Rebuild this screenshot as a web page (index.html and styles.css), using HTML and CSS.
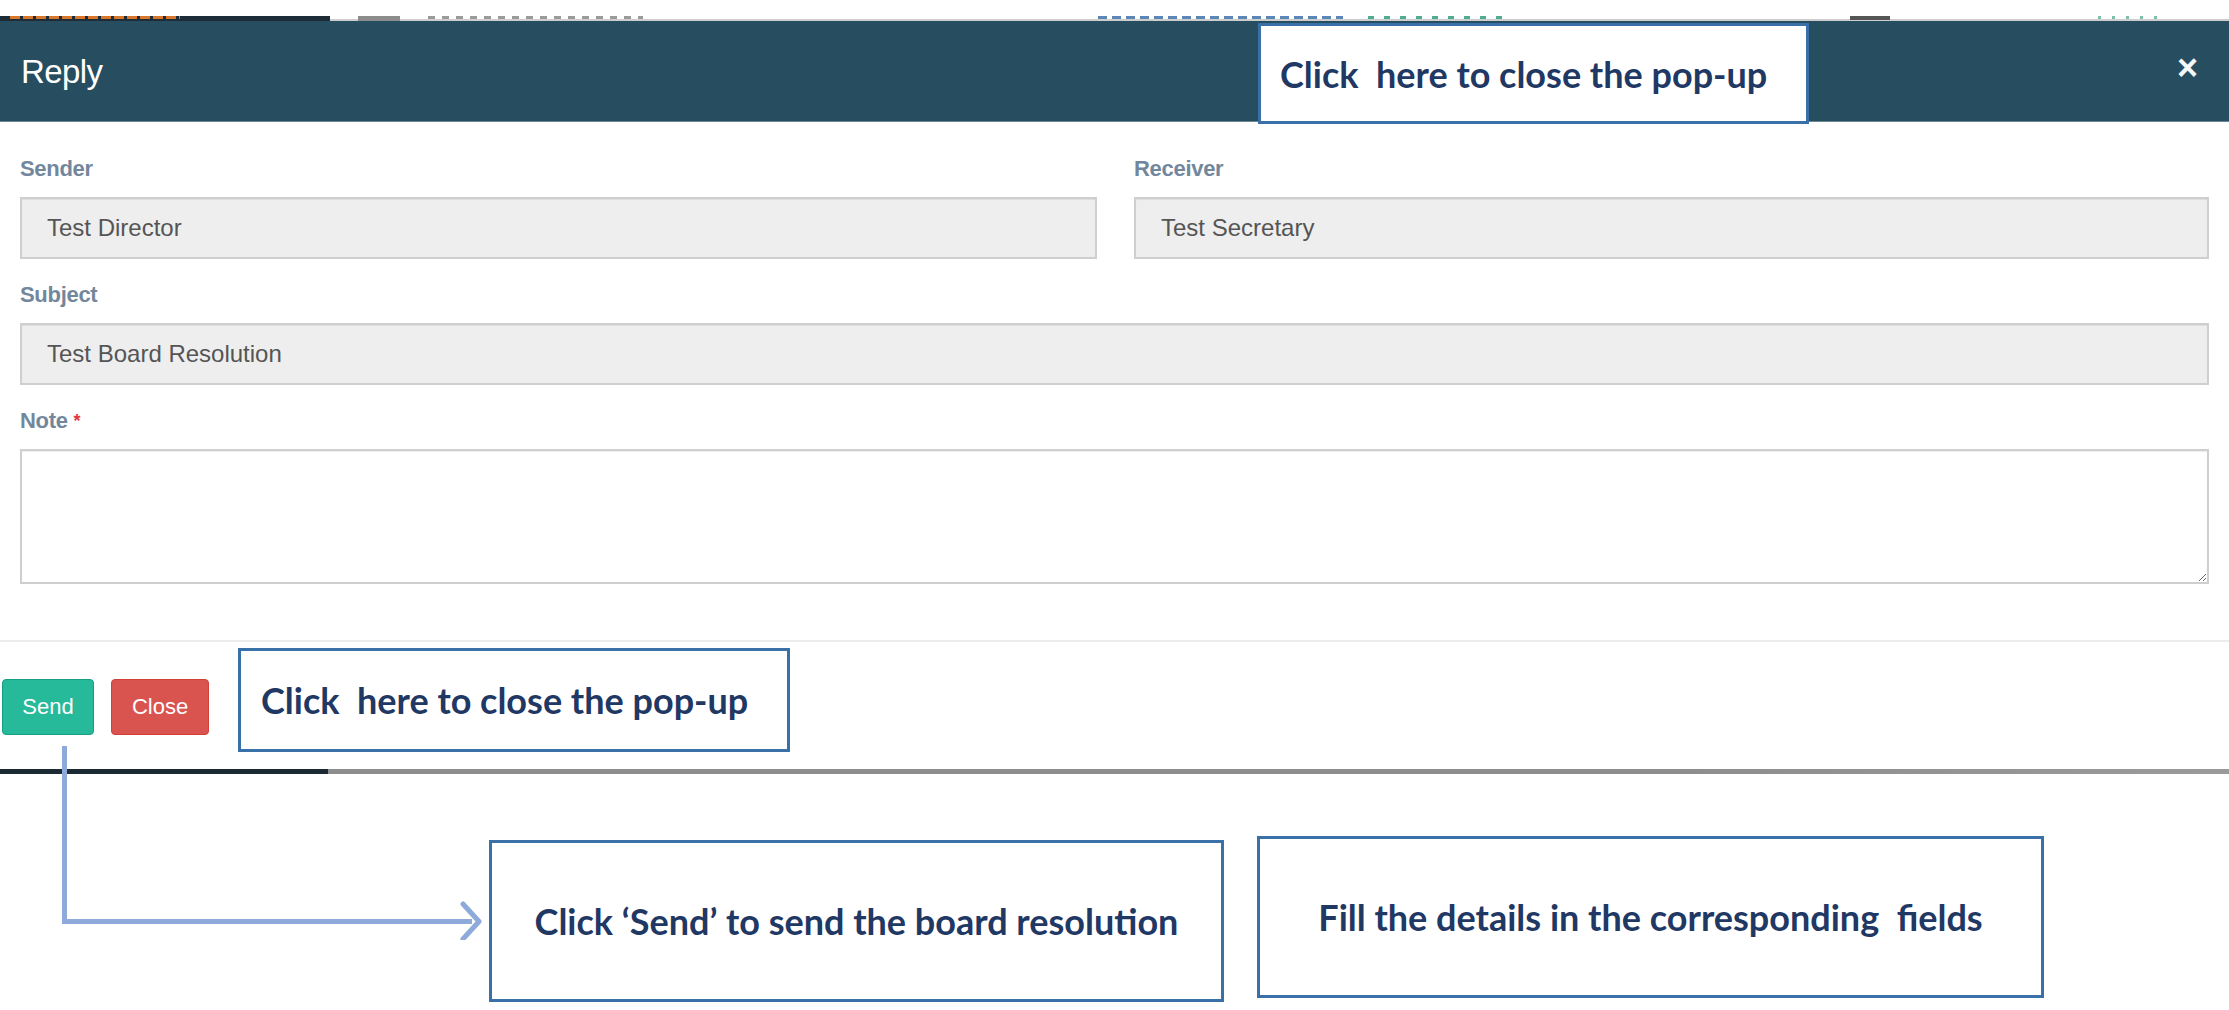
FILE: index.html
```html
<!DOCTYPE html>
<html lang="en">
<head>
<meta charset="utf-8">
<title>Reply</title>
<link rel="stylesheet" href="styles.css">
</head>
<body>
<div class="page">
  <div class="bg-strip">
    <div class="bg-bar">
      <div class="bg-left"><span class="frag frag-orange"></span></div>
      <div class="bg-right">
        <span class="frag frag-box"></span>
        <span class="frag frag-gray"></span>
        <span class="frag frag-blue"></span>
        <span class="frag frag-green"></span>
        <span class="frag frag-dark"></span>
        <span class="frag frag-green2"></span>
      </div>
    </div>
  </div>

  <div class="modal">
    <div class="modal-header">
      <h4 class="modal-title">Reply</h4>
      <button class="close-x" type="button">&times;</button>
    </div>
    <div class="modal-body">
      <div class="row-two">
        <div class="field">
          <label class="lbl">Sender</label>
          <input class="ctl" type="text" value="Test Director" disabled>
        </div>
        <div class="field">
          <label class="lbl">Receiver</label>
          <input class="ctl" type="text" value="Test Secretary" disabled>
        </div>
      </div>
      <div class="field">
        <label class="lbl">Subject</label>
        <input class="ctl" type="text" value="Test Board Resolution" disabled>
      </div>
      <div class="field">
        <label class="lbl">Note <span class="req">*</span></label>
        <textarea class="ctl note"></textarea>
      </div>
    </div>
    <div class="modal-footer">
      <button class="btn btn-send" type="button">Send</button>
      <button class="btn btn-close" type="button">Close</button>
    </div>
  </div>
  <div class="bg-bottom"><span class="bb-dark"></span><span class="bb-gray"></span></div>

  <div class="callout c-head"><span>Click&nbsp; here to close the pop-up</span></div>
  <div class="callout c-foot"><span>Click&nbsp; here to close the pop-up</span></div>
  <div class="callout c-send"><span>Click ‘Send’ to send the board resolution</span></div>
  <div class="callout c-fill"><span>Fill the details in the corresponding&nbsp; fields</span></div>

  <svg class="arrow" width="500" height="200" viewBox="0 0 500 200">
    <path d="M64.5 6 V181.5 H472" fill="none" stroke="#8eaadb" stroke-width="5"/>
    <path d="M463 164 L479 181.5 L463 199" fill="none" stroke="#8eaadb" stroke-width="5" stroke-linecap="round" stroke-linejoin="round"/>
  </svg>
</div>
</body>
</html>
```

FILE: styles.css
```css
* { box-sizing: border-box; }
html, body { margin: 0; padding: 0; background: #ffffff; }
body { width: 2229px; height: 1010px; overflow: hidden; font-family: "Liberation Sans", Arial, sans-serif; }
.page { position: relative; width: 2229px; height: 1010px; }

/* background page remnants (only the tops of its header show) */
.bg-strip { height: 21px; display: flex; align-items: flex-end; }
.bg-bar { height: 5px; width: 100%; display: flex; overflow: hidden; }
.bg-left { width: 330px; background: #1d2c36; display: flex; align-items: flex-start; padding-left: 10px; }
.bg-right { flex: 1; display: flex; align-items: flex-start; background: linear-gradient(#ffffff 0, #ffffff 3px, #cdcdcd 3px); }
.frag { display: block; height: 3px; }
.frag-orange { width: 170px; background: repeating-linear-gradient(to right, #d9772a 0 10px, #1d2c36 10px 13px); }
.frag-box { width: 42px; height: 5px; background: #8c8c8c; margin-left: 28px; }
.frag-gray { width: 215px; margin-left: 28px; background: repeating-linear-gradient(to right, #9a9a9a 0 7px, transparent 7px 14px); }
.frag-blue { width: 245px; margin-left: 455px; background: repeating-linear-gradient(to right, #5b86b8 0 9px, transparent 9px 14px); }
.frag-green { width: 140px; margin-left: 25px; background: repeating-linear-gradient(to right, #4fae8f 0 6px, transparent 6px 16px); }
.frag-dark { width: 40px; height: 4px; margin-left: 342px; background: #555555; }
.frag-green2 { width: 65px; margin-left: 208px; background: repeating-linear-gradient(to right, #7fbfa8 0 3px, transparent 3px 14px); }

/* modal */
.modal { background: #ffffff; }
.modal-header { height: 101px; background: #264d60; display: flex; align-items: center; justify-content: space-between; padding: 0 31px 0 21px; border-bottom: 1px solid #6d8795; }
.modal-title { margin: 0; font: 33px/1 "Liberation Sans", Arial, sans-serif; color: #ffffff; letter-spacing: -0.6px; }
.close-x { background: none; border: 0; padding: 0; color: #f4f6f7; font: bold 36px/1 "Liberation Sans", Arial, sans-serif; margin-top: -6px; }

.modal-body { padding: 32px 20px 0 20px; }
.row-two { display: grid; grid-template-columns: 1077px 1075px; column-gap: 37px; }
.field { display: flex; flex-direction: column; margin-bottom: 21px; }
.lbl { font: bold 22px/30px "Liberation Sans", Arial, sans-serif; color: #73879c; margin-bottom: 13px; letter-spacing: -0.3px; }
.req { color: #e2363a; font-size: 18px; vertical-align: top; }
.ctl { height: 62px; border: 2px solid #cfcfcf; background: #eeeeee; color: #555555; font: 24px "Liberation Sans", Arial, sans-serif; padding: 0 25px; box-shadow: inset 0 1px 1px rgba(0,0,0,0.075); border-radius: 0; }
.ctl:disabled { color: #555555; -webkit-text-fill-color: #555555; opacity: 1; }
.note { height: 135px; background: #ffffff; resize: vertical; }

.modal-footer { height: 129px; border-top: 2px solid #ececec; margin-top: 56px; display: flex; align-items: flex-start; gap: 17px; padding: 37px 0 0 2px; }
.btn { height: 56px; border: 1px solid transparent; border-radius: 4px; color: #ffffff; font: 22px "Liberation Sans", Arial, sans-serif; padding: 0; }
.btn-send { width: 92px; background: #26b99a; border-color: #169f85; }
.btn-close { width: 98px; background: #d9534f; border-color: #d43f3a; }

.bg-bottom { display: flex; height: 5px; }
.bb-dark { width: 328px; background: #1b2a33; }
.bb-gray { flex: 1; background: linear-gradient(to right, #8d8d8d, #8d8d8d 70%, #9a9a9a); }

/* annotation callouts */
.callout { position: absolute; background: #ffffff; border: 3px solid #3a70a8; display: flex; align-items: center; color: #1f3864; font: bold 36px/1 Lato, "Open Sans", sans-serif; white-space: nowrap; }
.c-head { left: 1258px; top: 23px; width: 551px; height: 101px; padding-left: 19px; }
.c-foot { left: 238px; top: 648px; width: 552px; height: 104px; padding-left: 20px; }
.c-send { left: 489px; top: 840px; width: 735px; height: 162px; justify-content: center; padding-top: 0; }
.c-fill { left: 1257px; top: 836px; width: 787px; height: 162px; justify-content: center; }

.arrow { position: absolute; left: 0; top: 740px; }
```
